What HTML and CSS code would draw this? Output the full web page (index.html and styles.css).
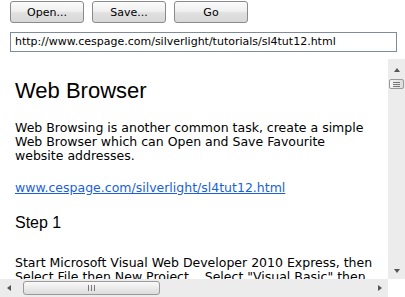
FILE: index.html
```html
<!DOCTYPE html>
<html lang="en">
<head>
  <meta charset="UTF-8">
  <title>Web Browser</title>
  <link rel="stylesheet" href="styles.css">
</head>
<body>
  <div class="app">
    <div class="toolbar">
      <button class="btn">Open...</button>
      <button class="btn">Save...</button>
      <button class="btn">Go</button>
    </div>
    <div class="address">http://www.cespage.com/silverlight/tutorials/sl4tut12.html</div>
    <div class="viewer">
      <div class="page">
        <h1>Web Browser</h1>
        <p>Web Browsing is another common task, create a simple Web Browser which can Open and Save Favourite website addresses.</p>
        <p><a href="#">www.cespage.com/silverlight/sl4tut12.html</a></p>
        <h2>Step 1</h2>
        <p class="wide">Start Microsoft Visual Web Developer 2010 Express, then Select File then New Project... Select "Visual Basic" then</p>
      </div>
      <div class="vbar">
        <span class="arrow up"></span>
        <span class="vthumb"><i></i><i></i><i></i></span>
        <span class="vtrack"></span>
        <span class="arrow down"></span>
      </div>
      <div class="hbar">
        <span class="arrow left"></span>
        <span class="hthumb"><i></i><i></i><i></i></span>
        <span class="htrack"></span>
        <span class="arrow right"></span>
      </div>
      <div class="corner"></div>
    </div>
  </div>
</body>
</html>
```

FILE: styles.css
```css
* { box-sizing: border-box; margin: 0; padding: 0; }
body {
  background: #fff;
  font-family: "DejaVu Sans", Verdana, sans-serif;
  color: #000;
  width: 405px;
  height: 297px;
  overflow: hidden;
}
.app {
  display: flex;
  flex-direction: column;
  height: 297px;
}
.toolbar {
  display: flex;
  gap: 8px;
  padding: 1px 0 0 10px;
}
.btn {
  width: 74px;
  height: 22px;
  border: 1px solid #8a8a8a;
  border-radius: 3px;
  background: linear-gradient(#fbfbfb, #f0f0f0 45%, #e0e0e0 55%, #d8d8d8);
  font-family: "DejaVu Sans", Verdana, sans-serif;
  font-size: 11px;
  color: #000;
}
.address {
  margin: 9px 8px 0 10px;
  height: 20px;
  border: 1px solid #7f8c99;
  padding: 2px 4px;
  font-size: 11px;
  line-height: 14px;
  white-space: nowrap;
  overflow: hidden;
}
.viewer {
  margin-top: 7px;
  flex: 1;
  display: grid;
  grid-template-columns: 1fr 17px;
  grid-template-rows: 1fr 18px;
  min-height: 0;
}
.page {
  overflow: hidden;
  padding: 19px 0 0 15px;
}
.page > * { width: 355px; }
.page > .wide { width: 368px; }
h1 {
  font-family: "Liberation Sans", Arial, sans-serif;
  font-weight: normal;
  font-size: 22px;
  line-height: 26px;
  margin-bottom: 17px;
}
h2 {
  font-family: "Liberation Sans", Arial, sans-serif;
  font-weight: normal;
  font-size: 16px;
  line-height: 20px;
  margin-bottom: 23px;
}
p {
  font-size: 12.5px;
  line-height: 14px;
  margin-bottom: 18px;
}
a { color: #1a5fd6; }
.vbar, .hbar {
  background: #ececec;
  display: flex;
}
.vbar { flex-direction: column; align-items: center; padding-top: 2px; }
.hbar { align-items: center; }
.corner { background: #fff; }
.arrow { width: 17px; height: 17px; flex: none; display: flex; align-items: center; justify-content: center; }
.arrow::before { content: ""; border: 3px solid transparent; }
.up::before { border-bottom: 4px solid #555; border-top: 0; }
.down::before { border-top: 4px solid #555; border-bottom: 0; }
.left::before { border-right: 4px solid #555; border-left: 0; }
.right::before { border-left: 4px solid #555; border-right: 0; }
.vtrack, .htrack { flex: 1; }
.vthumb {
  width: 15px;
  height: 10px;
  margin-top: 1px;
  border: 1px solid #9a9a9a;
  border-radius: 2px;
  background: linear-gradient(90deg, #f6f6f6, #dcdcdc);
  display: flex;
  flex-direction: column;
  align-items: center;
  justify-content: center;
  gap: 1px;
}
.vthumb i { width: 7px; height: 1px; background: #777; }
.hthumb {
  width: 137px;
  height: 14px;
  margin-left: 6px;
  border: 1px solid #9a9a9a;
  border-radius: 3px;
  background: linear-gradient(#fafafa, #dcdcdc);
  display: flex;
  align-items: center;
  justify-content: center;
  gap: 2px;
}
.hthumb i { width: 1px; height: 6px; background: #777; }
```
